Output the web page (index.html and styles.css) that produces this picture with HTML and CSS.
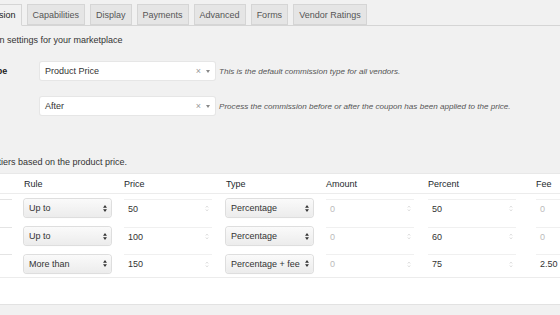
FILE: index.html
```html
<!DOCTYPE html>
<html lang="en">

<head>
    <meta charset="UTF-8">
    <meta name="viewport" content="width=device-width, initial-scale=1.0">
    <title>Commission Settings</title>
    <link rel="stylesheet" href="styles.css">
</head>

<body>

    <div class="wrap">
        <div class="tabs">
            <a class="tab active">Commission</a>
            <a class="tab">Capabilities</a>
            <a class="tab">Display</a>
            <a class="tab">Payments</a>
            <a class="tab">Advanced</a>
            <a class="tab">Forms</a>
            <a class="tab">Vendor Ratings</a>
        </div>

        <p class="intro">Commission settings for your marketplace</p>

        <div class="form-row">
            <label>Rate Type</label>
            <div class="s2">
                <span>Product Price</span>
                <span class="s2-clear">×</span>
                <span class="s2-arrow"></span>
            </div>
            <p class="hint">This is the default commission type for all vendors.</p>
        </div>
        <div class="form-row">
            <label>Coupon</label>
            <div class="s2">
                <span>After</span>
                <span class="s2-clear">×</span>
                <span class="s2-arrow"></span>
            </div>
            <p class="hint">Process the commission before or after the coupon has been applied to the price.</p>
        </div>

        <p class="intro tiers-intro">Define the tiers based on the product price.</p>

        <div class="tiers">
            <div class="th"></div>
            <div class="th">Rule</div>
            <div class="th">Price</div>
            <div class="th">Type</div>
            <div class="th">Amount</div>
            <div class="th">Percent</div>
            <div class="th">Fee</div>

            <!-- row 1 -->
            <div class="td"><div class="num stub"></div></div>
            <div class="td"><div class="sel">Up to<svg viewBox="0 0 5 9"><path d="M2.5 0L5 3.5H0z M2.5 9L5 5.5H0z"/></svg></div></div>
            <div class="td"><div class="num">50<svg class="spin" viewBox="0 0 5 9"><path d="M1 3.2L2.5 1.5L4 3.2 M1 5.8L2.5 7.5L4 5.8"/></svg></div></div>
            <div class="td"><div class="sel">Percentage<svg viewBox="0 0 5 9"><path d="M2.5 0L5 3.5H0z M2.5 9L5 5.5H0z"/></svg></div></div>
            <div class="td"><div class="num empty">0<svg class="spin" viewBox="0 0 5 9"><path d="M1 3.2L2.5 1.5L4 3.2 M1 5.8L2.5 7.5L4 5.8"/></svg></div></div>
            <div class="td"><div class="num">50<svg class="spin" viewBox="0 0 5 9"><path d="M1 3.2L2.5 1.5L4 3.2 M1 5.8L2.5 7.5L4 5.8"/></svg></div></div>
            <div class="td"><div class="num empty">0</div></div>

            <!-- row 2 -->
            <div class="td"><div class="num stub"></div></div>
            <div class="td"><div class="sel">Up to<svg viewBox="0 0 5 9"><path d="M2.5 0L5 3.5H0z M2.5 9L5 5.5H0z"/></svg></div></div>
            <div class="td"><div class="num">100<svg class="spin" viewBox="0 0 5 9"><path d="M1 3.2L2.5 1.5L4 3.2 M1 5.8L2.5 7.5L4 5.8"/></svg></div></div>
            <div class="td"><div class="sel">Percentage<svg viewBox="0 0 5 9"><path d="M2.5 0L5 3.5H0z M2.5 9L5 5.5H0z"/></svg></div></div>
            <div class="td"><div class="num empty">0<svg class="spin" viewBox="0 0 5 9"><path d="M1 3.2L2.5 1.5L4 3.2 M1 5.8L2.5 7.5L4 5.8"/></svg></div></div>
            <div class="td"><div class="num">60<svg class="spin" viewBox="0 0 5 9"><path d="M1 3.2L2.5 1.5L4 3.2 M1 5.8L2.5 7.5L4 5.8"/></svg></div></div>
            <div class="td"><div class="num empty">0</div></div>

            <!-- row 3 -->
            <div class="td last"><div class="num stub"></div></div>
            <div class="td last"><div class="sel">More than<svg viewBox="0 0 5 9"><path d="M2.5 0L5 3.5H0z M2.5 9L5 5.5H0z"/></svg></div></div>
            <div class="td last"><div class="num">150<svg class="spin" viewBox="0 0 5 9"><path d="M1 3.2L2.5 1.5L4 3.2 M1 5.8L2.5 7.5L4 5.8"/></svg></div></div>
            <div class="td last"><div class="sel">Percentage + fee<svg viewBox="0 0 5 9"><path d="M2.5 0L5 3.5H0z M2.5 9L5 5.5H0z"/></svg></div></div>
            <div class="td last"><div class="num empty">0<svg class="spin" viewBox="0 0 5 9"><path d="M1 3.2L2.5 1.5L4 3.2 M1 5.8L2.5 7.5L4 5.8"/></svg></div></div>
            <div class="td last"><div class="num">75<svg class="spin" viewBox="0 0 5 9"><path d="M1 3.2L2.5 1.5L4 3.2 M1 5.8L2.5 7.5L4 5.8"/></svg></div></div>
            <div class="td last"><div class="num">2.50</div></div>

            <div class="tfoot"></div>
        </div>
    </div>

</body>

</html>
```

FILE: styles.css
```css
* {
    margin: 0;
    padding: 0;
    box-sizing: border-box;
}

body {
    background-color: #f1f1f1;
    font-family: "Liberation Sans", Arial, sans-serif;
    font-size: 9px;
    color: #444;
    overflow: hidden;
    width: 560px;
    height: 315px;
}

.wrap {
    margin-left: -40px;
    width: 640px;
}

/* tabs */
.tabs {
    display: flex;
    gap: 5px;
    margin-top: 4px;
    height: 22px;
    border-bottom: 1px solid #d5d5d5;
}

.tab {
    display: flex;
    align-items: center;
    padding: 0 5px;
    background-color: #e5e5e5;
    border: 1px solid #d5d5d5;
    color: #555;
    font-size: 9px;
}

.tab.active {
    background-color: #f1f1f1;
    border-bottom-color: #f1f1f1;
    color: #222;
    margin-bottom: -1px;
}

.intro {
    margin-top: 8px;
    margin-left: -5px;
    line-height: 12px;
    color: #333;
}

/* settings rows */
.form-row {
    display: flex;
    align-items: center;
    height: 18px;
    margin-top: 16px;
}

.form-row + .form-row {
    margin-top: 17px;
}

.form-row label {
    width: 80px;
    padding-left: 5px;
    font-weight: bold;
    color: #222;
}

.s2 {
    width: 175px;
    height: 18px;
    background-color: #fff;
    border-radius: 2px;
    box-shadow: 0 0 0 1px #e6e6e6;
    display: flex;
    align-items: center;
    padding-left: 5px;
    color: #333;
}

.s2 span:first-child {
    flex: 1;
}

.s2-clear {
    color: #999;
    font-size: 9px;
    margin-right: 5px;
}

.s2-arrow {
    width: 0;
    height: 0;
    border-left: 2.5px solid transparent;
    border-right: 2.5px solid transparent;
    border-top: 3px solid #888;
    margin-right: 5px;
}

.hint {
    margin-left: 4px;
    font-size: 8.1px;
    font-style: italic;
    color: #555;
    white-space: nowrap;
}

.tiers-intro {
    margin-top: 41px;
}

/* tiers table */
.tiers {
    margin-top: 5px;
    background-color: #fff;
    border-top: 1px solid #e8e8e8;
    display: grid;
    grid-template-columns: 62px 100px 102px 100px 102px 108px 1fr;
}

.th {
    height: 20px;
    display: flex;
    align-items: center;
    padding-left: 2px;
    color: #23282d;
    border-bottom: 1px solid #ececec;
}

.td {
    height: 28px;
    display: flex;
    align-items: center;
    padding-left: 2px;
}

.td.last {
    border-bottom: 1px solid #ececec;
}

.tfoot {
    grid-column: 1 / -1;
    height: 27px;
    border-bottom: 1px solid #e2e2e2;
}

.sel {
    width: 87px;
    height: 18px;
    border-radius: 3px;
    background: linear-gradient(#fafafa, #ececec);
    box-shadow: 0 0 0 1px #dedede, 0 1px 1px rgba(0, 0, 0, 0.08);
    display: flex;
    align-items: center;
    justify-content: space-between;
    padding: 0 4px 0 5px;
    color: #333;
}

.sel svg {
    width: 4px;
    height: 7px;
    fill: #333;
}

.num {
    width: 88px;
    height: 19px;
    display: flex;
    align-items: center;
    justify-content: space-between;
    padding: 0 3px 0 4px;
    color: #333;
    border-top: 1px solid #f0f0f0;
}

.num.empty {
    color: #bbb;
}

.num.stub {
    width: 50px;
    border-top: 1px solid #e4e4e4;
}

.spin {
    width: 4px;
    height: 7px;
    fill: none;
    stroke: #c4c4c4;
    stroke-width: 0.8;
}
```
